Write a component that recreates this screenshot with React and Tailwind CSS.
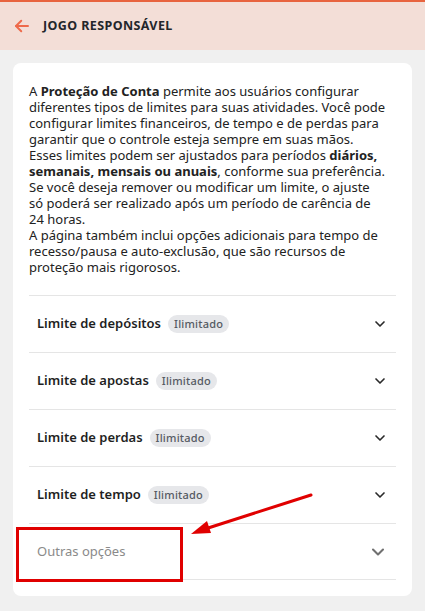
import { ChevronDown } from "lucide-react";

const limits = [
    { label: "Limite de depósitos" },
    { label: "Limite de apostas" },
    { label: "Limite de perdas" },
    { label: "Limite de tempo" },
];

const LimitRow = ({ label }) => {
    return (
        <div className="flex h-[57px] items-center justify-between border-t border-[#e5e5e5] pl-2 pr-2">
            <div className="flex items-center gap-[7px]">
                <span className="text-[13px] font-semibold text-[#1f1f1f]">{label}</span>
                <span className="rounded-full bg-[#e6e7ea] px-[6px] py-[1px] text-[11px] font-medium tracking-[0.2px] text-[#555a63]">
                    Ilimitado
                </span>
            </div>
            <ChevronDown size={16} strokeWidth={2.5} className="text-[#2a2a2a]" />
        </div>
    );
};

export default function App() {
    return (
        <div className="relative min-h-[611px] w-full bg-[#f0f0f0] font-['Noto_Sans',sans-serif]">
            <header className="flex h-[50px] items-center gap-[12px] border-t-2 border-[#e8643f] bg-[#f3ded7] px-[13px]">
                <svg width="18" height="18" viewBox="0 0 24 24" fill="none" stroke="#ee6a4b" strokeWidth="2.6" strokeLinecap="round" strokeLinejoin="round">
                    <path d="M20 12H4" />
                    <path d="M11 5l-7 7 7 7" />
                </svg>
                <h1 className="text-[12.5px] font-bold tracking-[0.4px] text-[#23262b]">JOGO RESPONSÁVEL</h1>
            </header>

            <div className="px-[13px] pt-[13px]">
                <div className="rounded-lg bg-white px-4 pt-[20px] pb-4">
                    <p className="whitespace-nowrap text-[13px] leading-[16px] text-[#222]">
                        A <b>Proteção de Conta</b> permite aos usuários configurar<br />
                        diferentes tipos de limites para suas atividades. Você pode<br />
                        configurar limites financeiros, de tempo e de perdas para<br />
                        garantir que o controle esteja sempre em suas mãos.<br />
                        Esses limites podem ser ajustados para períodos <b>diários,</b><br />
                        <b>semanais, mensais ou anuais</b>, conforme sua preferência.<br />
                        Se você deseja remover ou modificar um limite, o ajuste<br />
                        só poderá ser realizado após um período de carência de<br />
                        24 horas.<br />
                        A página também inclui opções adicionais para tempo de<br />
                        recesso/pausa e auto-exclusão, que são recursos de<br />
                        proteção mais rigorosos.
                    </p>

                    <div className="mt-[20px]">
                        {limits.map((item) => (
                            <LimitRow key={item.label} label={item.label} />
                        ))}
                        <div className="flex h-[57px] items-center justify-between border-y border-[#e5e5e5] pl-2 pr-2">
                            <span className="text-[13px] text-[#8a8a8a]">Outras opções</span>
                            <ChevronDown size={20} strokeWidth={2.5} className="text-[#707070]" />
                        </div>
                    </div>
                </div>
            </div>

            {/* highlight box + pointer arrow */}
            <div className="absolute left-[16px] top-[527px] h-[55px] w-[167px] border-[3px] border-[#e00000]" />
            <svg className="absolute left-0 top-0" width="425" height="611" style={{ pointerEvents: "none" }}>
                <line x1="311" y1="495" x2="205" y2="529" stroke="#e00000" strokeWidth="3" strokeLinecap="round" />
                <polygon points="191,534 207,521 211,533" fill="#e00000" />
            </svg>
        </div>
    );
}
